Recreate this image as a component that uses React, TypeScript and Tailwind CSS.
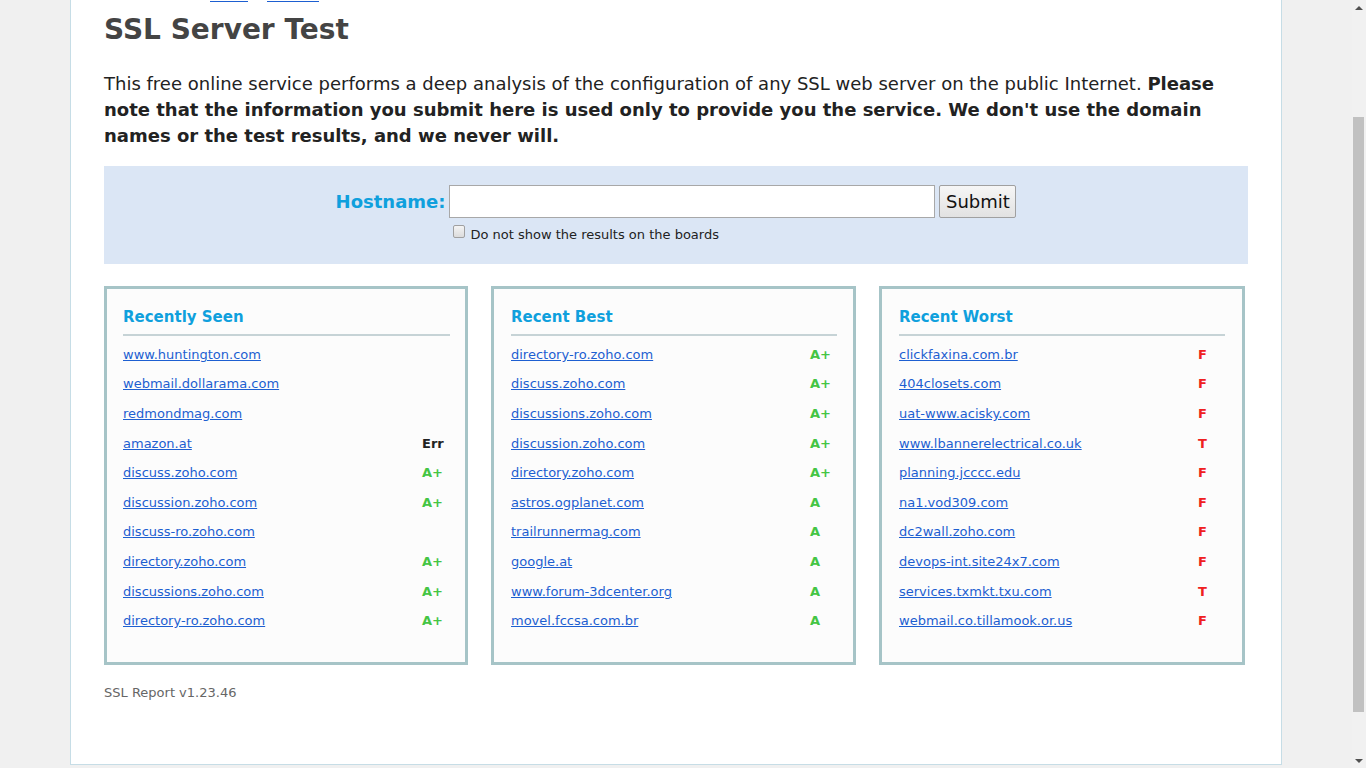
import React from "react";

type Row = { host: string; grade?: string; kind?: "good" | "bad" | "err" };

const recentlySeen: Row[] = [
  { host: "www.huntington.com" },
  { host: "webmail.dollarama.com" },
  { host: "redmondmag.com" },
  { host: "amazon.at", grade: "Err", kind: "err" },
  { host: "discuss.zoho.com", grade: "A+", kind: "good" },
  { host: "discussion.zoho.com", grade: "A+", kind: "good" },
  { host: "discuss-ro.zoho.com" },
  { host: "directory.zoho.com", grade: "A+", kind: "good" },
  { host: "discussions.zoho.com", grade: "A+", kind: "good" },
  { host: "directory-ro.zoho.com", grade: "A+", kind: "good" },
];

const recentBest: Row[] = [
  { host: "directory-ro.zoho.com", grade: "A+", kind: "good" },
  { host: "discuss.zoho.com", grade: "A+", kind: "good" },
  { host: "discussions.zoho.com", grade: "A+", kind: "good" },
  { host: "discussion.zoho.com", grade: "A+", kind: "good" },
  { host: "directory.zoho.com", grade: "A+", kind: "good" },
  { host: "astros.ogplanet.com", grade: "A", kind: "good" },
  { host: "trailrunnermag.com", grade: "A", kind: "good" },
  { host: "google.at", grade: "A", kind: "good" },
  { host: "www.forum-3dcenter.org", grade: "A", kind: "good" },
  { host: "movel.fccsa.com.br", grade: "A", kind: "good" },
];

const recentWorst: Row[] = [
  { host: "clickfaxina.com.br", grade: "F", kind: "bad" },
  { host: "404closets.com", grade: "F", kind: "bad" },
  { host: "uat-www.acisky.com", grade: "F", kind: "bad" },
  { host: "www.lbannerelectrical.co.uk", grade: "T", kind: "bad" },
  { host: "planning.jcccc.edu", grade: "F", kind: "bad" },
  { host: "na1.vod309.com", grade: "F", kind: "bad" },
  { host: "dc2wall.zoho.com", grade: "F", kind: "bad" },
  { host: "devops-int.site24x7.com", grade: "F", kind: "bad" },
  { host: "services.txmkt.txu.com", grade: "T", kind: "bad" },
  { host: "webmail.co.tillamook.or.us", grade: "F", kind: "bad" },
];

// row heights follow the reference's sub-pixel rounding (29.56px average)
const rowHeights = [
  "h-[29px]",
  "h-[30px]",
  "h-[30px]",
  "h-[29px]",
  "h-[30px]",
  "h-[29px]",
  "h-[30px]",
  "h-[30px]",
  "h-[29px]",
  "h-[30px]",
];

function gradeClass(kind?: string) {
  if (kind === "good") return "text-[#44c544]";
  if (kind === "bad") return "text-[#ef2020]";
  return "text-[#222222]";
}

function Board({ title, rows, pad }: { title: string; rows: Row[]; pad: string }) {
  return (
    <div className={"h-[379px] border-[3px] border-[#a6c4c7] bg-[#fcfcfc] pt-[19px] " + pad}>
      <div className="text-[15px] font-bold leading-[18px] text-[#0fa0dd]">{title}</div>
      <div className="mt-[8px] h-[2px] bg-[#c6d3d6]" />
      <div className="mt-[4px]">
        {rows.map((r, i) => (
          <div key={r.host} className={"flex items-start pt-[7px] text-[13px] leading-[15px] " + rowHeights[i]}>
            <a href="#" className="w-[299px] text-[#1d5fd1] underline">
              {r.host}
            </a>
            {r.grade && <span className={"font-bold " + gradeClass(r.kind)}>{r.grade}</span>}
          </div>
        ))}
      </div>
    </div>
  );
}

function Scrollbar() {
  return (
    <div className="relative flex h-[768px] w-[14px] flex-col bg-[#f1f1f1]">
      <div className="flex h-[14px] items-center justify-center">
        <svg width="8" height="5" viewBox="0 0 8 5">
          <path d="M0 5 L4 1 L8 5 Z" fill="#505050" />
        </svg>
      </div>
      <div className="relative flex-1">
        <div className="absolute left-[1px] top-[103px] h-[595px] w-[11px] bg-[#c1c1c1]" />
      </div>
      <div className="flex h-[14px] items-center justify-center">
        <svg width="8" height="5" viewBox="0 0 8 5">
          <path d="M0 0 L8 0 L4 4 Z" fill="#505050" />
        </svg>
      </div>
    </div>
  );
}

export default function App() {
  return (
    <div className="flex h-[768px] w-[1366px] overflow-hidden bg-[#f0f0f0] font-['DejaVu_Sans',Verdana,sans-serif]">
      <div className="flex flex-1 justify-center">
        <div className="box-border h-[765px] w-[1212px] border-x border-b border-[#c6dde6] bg-white px-[33px]">
          {/* breadcrumb remnants scrolled off the top */}
          <div className="flex h-[2px] items-end text-[13px]">
            <span className="ml-[106px] h-[1px] w-[38px] bg-[#1d5fd1]" />
            <span className="ml-[19px] h-[1px] w-[52px] bg-[#1d5fd1]" />
          </div>
          <h1 className="mt-[11px] text-[28px] font-bold leading-[34px] text-[#444444]">SSL Server Test</h1>
          <p className="mt-[24px] text-[18px] leading-[26px] text-[#222222]">
            This free online service performs a deep analysis of the configuration of any SSL web server on the
            public Internet.{" "}
            <b>
              Please note that the information you submit here is used only to provide you the service. We don't use
              the domain names or the test results, and we never will.
            </b>
          </p>
          <div className="mt-[17px] h-[98px] bg-[#dbe6f5] pt-[19px]">
            <div className="flex justify-center">
              <div className="flex h-[33px] items-center text-[18px] font-bold text-[#0fa0dd]">Hostname:</div>
              <div className="ml-[4px]">
                <div className="flex">
                  <input
                    type="text"
                    className="h-[33px] w-[486px] border border-[#a8a8a8] bg-white px-1 text-[16px] outline-none"
                  />
                  <button className="ml-[4px] h-[33px] w-[77px] rounded-[2px] border border-[#a0a0a0] bg-gradient-to-b from-[#f6f6f6] to-[#e2e2e2] text-[18px] text-[#111111]">
                    Submit
                  </button>
                </div>
                <div className="mt-[7px] flex items-start">
                  <span className="ml-[4px] h-[13px] w-[12px] rounded-[2px] border border-[#a0a0a0] bg-gradient-to-b from-[#f4f4f4] to-[#dcdcdc]" />
                  <span className="ml-[5px] mt-[2px] text-[13px] leading-[15px] text-[#222222]">
                    Do not show the results on the boards
                  </span>
                </div>
              </div>
            </div>
          </div>
          <div className="mt-[22px] grid w-[1141px] grid-cols-[364px_365px_366px] gap-x-[23px]">
            <Board title="Recently Seen" rows={recentlySeen} pad="pl-[16px] pr-[15px]" />
            <Board title="Recent Best" rows={recentBest} pad="pl-[17px] pr-[16px]" />
            <Board title="Recent Worst" rows={recentWorst} pad="pl-[17px] pr-[17px]" />
          </div>
          <div className="mt-[20px] text-[13px] leading-[15px] text-[#666666]">SSL Report v1.23.46</div>
        </div>
      </div>
      <Scrollbar />
    </div>
  );
}
